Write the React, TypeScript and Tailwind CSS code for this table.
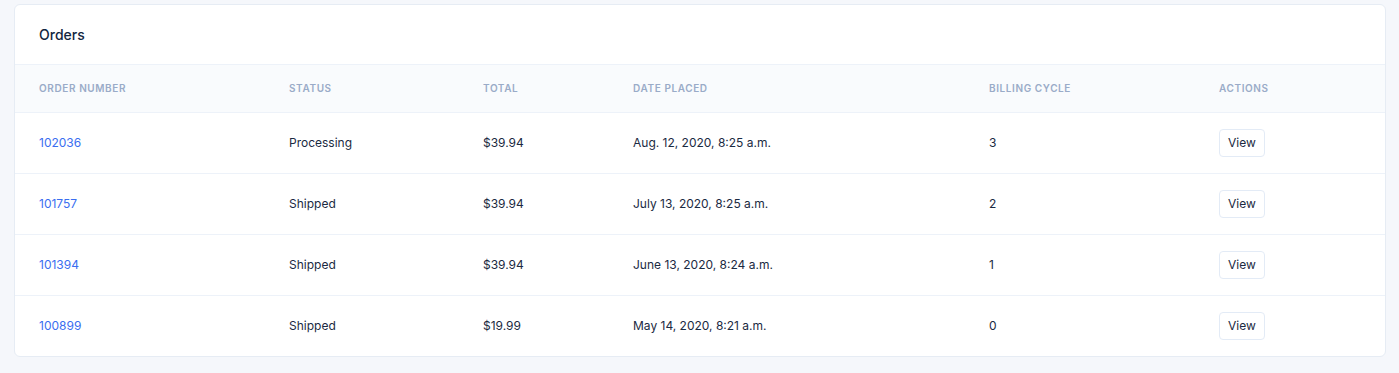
import React from "react";

const rows = [
  { id: "102036", status: "Processing", total: "$39.94", date: "Aug. 12, 2020, 8:25 a.m.", cycle: "3" },
  { id: "101757", status: "Shipped", total: "$39.94", date: "July 13, 2020, 8:25 a.m.", cycle: "2" },
  { id: "101394", status: "Shipped", total: "$39.94", date: "June 13, 2020, 8:24 a.m.", cycle: "1" },
  { id: "100899", status: "Shipped", total: "$19.99", date: "May 14, 2020, 8:21 a.m.", cycle: "0" },
];

const th = "text-[10px] font-semibold uppercase tracking-[0.06em] text-[#9aabc8]";

export default function App() {
  return (
    <div className="min-h-[373px] w-full bg-[#f5f7fb] pl-[14px] pr-[13px] pt-[4px] pb-[16px] font-['Inter','Noto_Sans',sans-serif] text-[#1b2a42]">
      <div className="rounded-[6px] border border-[#e6ecf4] bg-white overflow-hidden">
        <div className="h-[60px] flex items-center px-[24px] border-b border-[#edf2f9]">
          <h4 className="text-[14px] font-medium text-[#12263f]">Orders</h4>
        </div>
        <table className="w-full border-collapse text-left">
          <thead>
            <tr className="bg-[#f9fbfd] h-[47px] border-b border-[#edf2f9]">
              <th className={`w-[274px] pl-[24px] ${th}`}>Order Number</th>
              <th className={`w-[194px] ${th}`}>Status</th>
              <th className={`w-[150px] ${th}`}>Total</th>
              <th className={`w-[356px] ${th}`}>Date Placed</th>
              <th className={`w-[230px] ${th}`}>Billing Cycle</th>
              <th className={th}>Actions</th>
            </tr>
          </thead>
          <tbody>
            {rows.map((r, i) => (
              <tr key={r.id} className={`h-[61px] text-[12px] ${i < rows.length - 1 ? "border-b border-[#edf2f9]" : ""}`}>
                <td className="pl-[24px] text-[#3a6ef0]">{r.id}</td>
                <td>{r.status}</td>
                <td>{r.total}</td>
                <td>{r.date}</td>
                <td>{r.cycle}</td>
                <td>
                  <button className="h-[28px] px-[8px] rounded-[4px] border border-[#e3ebf6] bg-white text-[12px] text-[#1b2a42]">View</button>
                </td>
              </tr>
            ))}
          </tbody>
        </table>
      </div>
    </div>
  );
}
